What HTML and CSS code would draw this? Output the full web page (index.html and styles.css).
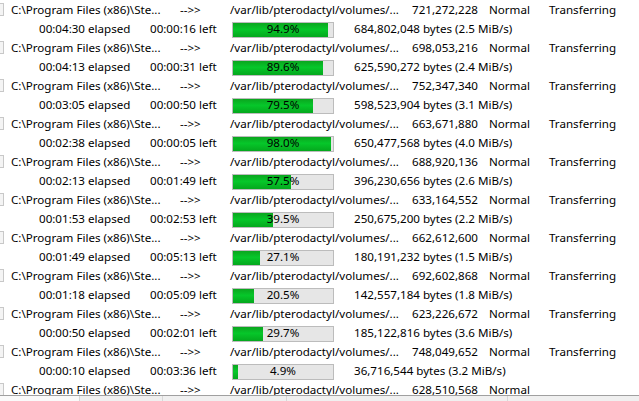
FILE: index.html
```html
<!DOCTYPE html>
<html>
<head>
    <title>Transfer Queue</title>
    <link rel="stylesheet" href="styles.css">
</head>
<body>
    <div class="queue">
        <div class="item">
            <div class="line main"><span class="icon"></span><span class="src">C:\Program Files (x86)\Ste...</span><span class="op">--&gt;&gt;</span><span class="dst">/var/lib/pterodactyl/volumes/...</span><span class="size">721,272,228</span><span class="prio">Normal</span><span class="state">Transferring</span></div>
            <div class="line sub"><span class="elapsed">00:04:30 elapsed</span><span class="left">00:00:16 left</span><span class="bar"><span class="fill" style="width: 94.9%"></span><span class="pct">94.9%</span></span><span class="bytes">684,802,048 bytes (2.5 MiB/s)</span></div>
        </div>
        <div class="item">
            <div class="line main"><span class="icon"></span><span class="src">C:\Program Files (x86)\Ste...</span><span class="op">--&gt;&gt;</span><span class="dst">/var/lib/pterodactyl/volumes/...</span><span class="size">698,053,216</span><span class="prio">Normal</span><span class="state">Transferring</span></div>
            <div class="line sub"><span class="elapsed">00:04:13 elapsed</span><span class="left">00:00:31 left</span><span class="bar"><span class="fill" style="width: 89.6%"></span><span class="pct">89.6%</span></span><span class="bytes">625,590,272 bytes (2.4 MiB/s)</span></div>
        </div>
        <div class="item">
            <div class="line main"><span class="icon"></span><span class="src">C:\Program Files (x86)\Ste...</span><span class="op">--&gt;&gt;</span><span class="dst">/var/lib/pterodactyl/volumes/...</span><span class="size">752,347,340</span><span class="prio">Normal</span><span class="state">Transferring</span></div>
            <div class="line sub"><span class="elapsed">00:03:05 elapsed</span><span class="left">00:00:50 left</span><span class="bar"><span class="fill" style="width: 79.5%"></span><span class="pct">79.5%</span></span><span class="bytes">598,523,904 bytes (3.1 MiB/s)</span></div>
        </div>
        <div class="item">
            <div class="line main"><span class="icon"></span><span class="src">C:\Program Files (x86)\Ste...</span><span class="op">--&gt;&gt;</span><span class="dst">/var/lib/pterodactyl/volumes/...</span><span class="size">663,671,880</span><span class="prio">Normal</span><span class="state">Transferring</span></div>
            <div class="line sub"><span class="elapsed">00:02:38 elapsed</span><span class="left">00:00:05 left</span><span class="bar"><span class="fill" style="width: 98.0%"></span><span class="pct">98.0%</span></span><span class="bytes">650,477,568 bytes (4.0 MiB/s)</span></div>
        </div>
        <div class="item">
            <div class="line main"><span class="icon"></span><span class="src">C:\Program Files (x86)\Ste...</span><span class="op">--&gt;&gt;</span><span class="dst">/var/lib/pterodactyl/volumes/...</span><span class="size">688,920,136</span><span class="prio">Normal</span><span class="state">Transferring</span></div>
            <div class="line sub"><span class="elapsed">00:02:13 elapsed</span><span class="left">00:01:49 left</span><span class="bar"><span class="fill" style="width: 57.5%"></span><span class="pct">57.5%</span></span><span class="bytes">396,230,656 bytes (2.6 MiB/s)</span></div>
        </div>
        <div class="item">
            <div class="line main"><span class="icon"></span><span class="src">C:\Program Files (x86)\Ste...</span><span class="op">--&gt;&gt;</span><span class="dst">/var/lib/pterodactyl/volumes/...</span><span class="size">633,164,552</span><span class="prio">Normal</span><span class="state">Transferring</span></div>
            <div class="line sub"><span class="elapsed">00:01:53 elapsed</span><span class="left">00:02:53 left</span><span class="bar"><span class="fill" style="width: 39.5%"></span><span class="pct">39.5%</span></span><span class="bytes">250,675,200 bytes (2.2 MiB/s)</span></div>
        </div>
        <div class="item">
            <div class="line main"><span class="icon"></span><span class="src">C:\Program Files (x86)\Ste...</span><span class="op">--&gt;&gt;</span><span class="dst">/var/lib/pterodactyl/volumes/...</span><span class="size">662,612,600</span><span class="prio">Normal</span><span class="state">Transferring</span></div>
            <div class="line sub"><span class="elapsed">00:01:49 elapsed</span><span class="left">00:05:13 left</span><span class="bar"><span class="fill" style="width: 27.1%"></span><span class="pct">27.1%</span></span><span class="bytes">180,191,232 bytes (1.5 MiB/s)</span></div>
        </div>
        <div class="item">
            <div class="line main"><span class="icon"></span><span class="src">C:\Program Files (x86)\Ste...</span><span class="op">--&gt;&gt;</span><span class="dst">/var/lib/pterodactyl/volumes/...</span><span class="size">692,602,868</span><span class="prio">Normal</span><span class="state">Transferring</span></div>
            <div class="line sub"><span class="elapsed">00:01:18 elapsed</span><span class="left">00:05:09 left</span><span class="bar"><span class="fill" style="width: 20.5%"></span><span class="pct">20.5%</span></span><span class="bytes">142,557,184 bytes (1.8 MiB/s)</span></div>
        </div>
        <div class="item">
            <div class="line main"><span class="icon"></span><span class="src">C:\Program Files (x86)\Ste...</span><span class="op">--&gt;&gt;</span><span class="dst">/var/lib/pterodactyl/volumes/...</span><span class="size">623,226,672</span><span class="prio">Normal</span><span class="state">Transferring</span></div>
            <div class="line sub"><span class="elapsed">00:00:50 elapsed</span><span class="left">00:02:01 left</span><span class="bar"><span class="fill" style="width: 29.7%"></span><span class="pct">29.7%</span></span><span class="bytes">185,122,816 bytes (3.6 MiB/s)</span></div>
        </div>
        <div class="item">
            <div class="line main"><span class="icon"></span><span class="src">C:\Program Files (x86)\Ste...</span><span class="op">--&gt;&gt;</span><span class="dst">/var/lib/pterodactyl/volumes/...</span><span class="size">748,049,652</span><span class="prio">Normal</span><span class="state">Transferring</span></div>
            <div class="line sub"><span class="elapsed">00:00:10 elapsed</span><span class="left">00:03:36 left</span><span class="bar"><span class="fill" style="width: 4.9%"></span><span class="pct">4.9%</span></span><span class="bytes">36,716,544 bytes (3.2 MiB/s)</span></div>
        </div>
        <div class="item last">
            <div class="line main"><span class="icon"></span><span class="src">C:\Program Files (x86)\Ste...</span><span class="op">--&gt;&gt;</span><span class="dst">/var/lib/pterodactyl/volumes/...</span><span class="size">628,510,568</span><span class="prio">Normal</span><span class="state"></span></div>
        </div>
    </div>
    <div class="scrollbar">
        <span class="seg seg-a"></span><span class="seg seg-b"></span><span class="seg seg-c"></span><span class="seg seg-d"></span>
    </div>
</body>
</html>
```

FILE: styles.css
```css
/* queue list, windows-ish */
body {
    margin: 0;
    background: #ffffff;
    color: #000000;
    font-family: "Noto Sans", "Open Sans", Arial, sans-serif;
    font-size: 11.6px;
    overflow: hidden;
}

.queue {
    height: 395px;
    overflow: hidden;
}

.item { height: 38px; }

.line {
    display: flex;
    align-items: center;
    height: 19px;
    line-height: 19px;
    white-space: nowrap;
}

/* --- first line --- */
.icon {
    width: 4px;
    height: 13px;
    margin-right: 7px;
    background: #f4f4f4;
    border: 1px solid #c8c8c8;
    border-left: none;
    box-sizing: border-box;
}
.src { width: 169px; }
.op { width: 50px; }
.dst { width: 182px; }
.size { width: 65px; text-align: right; }
.prio { width: 60px; padding-left: 12px; }

/* --- second line --- */
.sub { padding-left: 39px; }
.elapsed { width: 111px; }
.left { width: 82px; }

.bar {
    position: relative;
    width: 102px;
    height: 16px;
    margin-top: 3px;
    box-sizing: border-box;
    border: 1px solid #bcbcbc;
    background: #e6e6e6;
}
.fill {
    display: block;
    height: 100%;
    background: linear-gradient(#0ba51f, #06c72a 45%, #04a81d);
}
.pct {
    position: absolute;
    left: 0;
    right: 0;
    top: -2px;
    text-align: center;
    line-height: 16px;
}
.bytes { padding-left: 20px; }

/* --- bottom scrollbar strip --- */
.scrollbar {
    display: flex;
    height: 6px;
    border-top: 1px solid #a0a0a0;
    background: #f0f0f0;
}
.seg { height: 100%; border-right: 1px solid #d8d8d8; }
.seg-a { width: 79px; background: #fafafa; }
.seg-b { width: 82px; }
.seg-c { width: 123px; }
.seg-d { width: 220px; }
```
